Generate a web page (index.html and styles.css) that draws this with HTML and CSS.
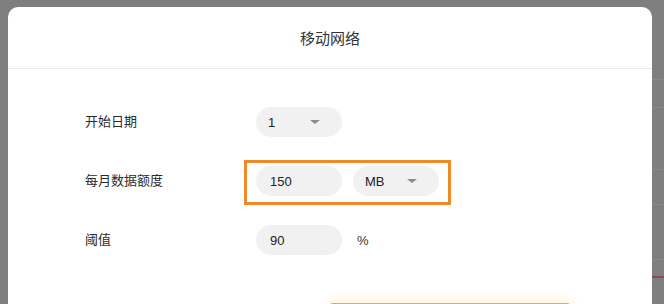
FILE: index.html
```html
<!DOCTYPE html>
<html lang="zh-CN">
<head>
    <meta charset="UTF-8">
    <meta name="viewport" content="width=device-width, initial-scale=1.0">
    <title>移动网络</title>
    <link rel="stylesheet" href="styles.css">
</head>
<body>

    <div class="backdrop">
        <div class="dialog">
            <div class="dialog-header">移动网络</div>

            <div class="dialog-body">
                <div class="form-row">
                    <label class="form-label">开始日期</label>
                    <div class="form-controls">
                        <div class="select">
                            <span>1</span>
                            <span class="caret"></span>
                        </div>
                    </div>
                </div>

                <div class="form-row">
                    <label class="form-label" for="quota">每月数据额度</label>
                    <div class="form-controls highlight">
                        <input type="text" id="quota" class="pill-input" value="150">
                        <div class="select">
                            <span>MB</span>
                            <span class="caret"></span>
                        </div>
                    </div>
                </div>

                <div class="form-row">
                    <label class="form-label" for="threshold">阈值</label>
                    <div class="form-controls">
                        <input type="text" id="threshold" class="pill-input" value="90">
                        <span class="unit">%</span>
                    </div>
                </div>

                <div class="form-actions">
                    <button class="btn-save" aria-label="保存"></button>
                </div>
            </div>
        </div>

        <!-- page behind the overlay, peeking out on the right -->
        <div class="page-edge">
            <div class="edge-row" style="height: 80px"></div>
            <div class="edge-row" style="height: 28px"></div>
            <div class="edge-row" style="height: 62px"></div>
            <div class="edge-row" style="height: 35px"></div>
            <div class="edge-row" style="height: 55px"></div>
            <div class="edge-row red" style="height: 17px"></div>
            <div class="edge-row red"></div>
        </div>
    </div>

</body>
</html>
```

FILE: styles.css
```css
body {
    margin: 0;
    font-family: "Liberation Sans", "Noto Sans CJK SC", sans-serif;
    color: #333;
    background-color: #7f7f7f;
}
.backdrop {
    display: flex;
    height: 304px;
    overflow: hidden;
}
.dialog {
    width: 644px;
    margin: 7px 0 0 8px;
    height: 320px;
    background-color: #fff;
    border-radius: 10px 10px 0 0;
    flex-shrink: 0;
}
.dialog-header {
    height: 61px;
    display: flex;
    align-items: center;
    justify-content: center;
    font-size: 15px;
    border-bottom: 1px solid #ebebeb;
}
.dialog-body {
    padding: 38px 0 0 77px;
    display: flex;
    flex-direction: column;
    gap: 29px;
}
.form-row {
    display: flex;
    align-items: center;
    height: 30px;
}
.form-label {
    width: 171px;
    font-size: 13px;
    color: #2b2b2b;
    padding-bottom: 4px;
}
.form-controls {
    display: flex;
    align-items: center;
    gap: 11px;
}
.highlight {
    position: relative;
}
.highlight::after {
    content: "";
    position: absolute;
    top: -6px;
    right: -12px;
    bottom: -9px;
    left: -12px;
    border: 3px solid #f08a28;
}
.select, .pill-input {
    box-sizing: border-box;
    width: 86px;
    height: 30px;
    border-radius: 15px;
    background-color: #f1f1f2;
    font-size: 13px;
    color: #222;
}
.select {
    display: flex;
    align-items: center;
    justify-content: space-between;
    padding: 0 22px 0 12px;
}
.pill-input {
    border: none;
    padding: 0 14px;
    font-family: inherit;
    outline: none;
}
.caret {
    width: 0;
    height: 0;
    border-left: 5px solid transparent;
    border-right: 5px solid transparent;
    border-top: 4px solid #8c8c8c;
}
.unit {
    font-size: 13px;
    margin-left: 4px;
}
.form-actions {
    padding: 19px 0 0 245px;
}
.btn-save {
    width: 240px;
    height: 40px;
    border: none;
    border-top: 2px solid #e2aa5c;
    border-radius: 3px;
    background-color: #fdfeff;
    box-shadow: 0 -3px 8px 2px rgba(255, 230, 170, 0.4);
}
.page-edge {
    flex: 1;
    display: flex;
    flex-direction: column;
}
.edge-row {
    box-sizing: border-box;
    border-bottom: 1px solid #8a8a8a;
}
.edge-row.red {
    border-bottom-color: #8c4a54;
}
```
